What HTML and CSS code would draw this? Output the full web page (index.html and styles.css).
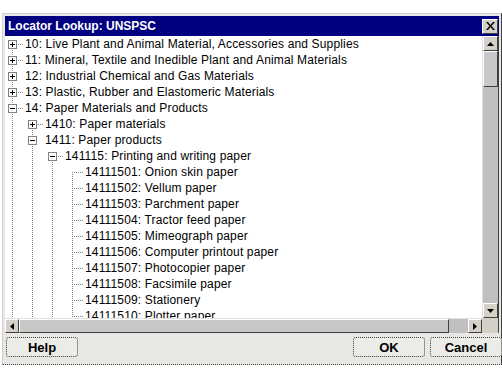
FILE: index.html
```html
<!DOCTYPE html>
<html lang="en">
<head>
  <meta charset="UTF-8" />
  <title>Locator Lookup: UNSPSC</title>
  <link rel="stylesheet" href="styles.css">
</head>
<body>

<div class="dialog">
  <div class="titlebar">
    <span class="title">Locator Lookup: UNSPSC</span>
    <span class="close">
      <svg width="9" height="8" viewBox="0 0 9 8"><path d="M0 0h2l2.5 3 2.5-3h2L5.5 4 9 8H7L4.5 5 2 8H0l3.5-4z" fill="#000"/></svg>
    </span>
  </div>

  <div class="panel">
    <div class="tree">
      <div class="row"><span class="cell tee first"><i class="box plus"></i></span><span class="label">10: Live Plant and Animal Material, Accessories and Supplies</span></div>
      <div class="row"><span class="cell tee"><i class="box plus"></i></span><span class="label">11: Mineral, Textile and Inedible Plant and Animal Materials</span></div>
      <div class="row"><span class="cell tee nodash"><i class="box plus"></i></span><span class="label">12: Industrial Chemical and Gas Materials</span></div>
      <div class="row"><span class="cell tee"><i class="box plus"></i></span><span class="label">13: Plastic, Rubber and Elastomeric Materials</span></div>
      <div class="row"><span class="cell tee"><i class="box minus"></i></span><span class="label">14: Paper Materials and Products</span></div>
      <div class="row"><span class="cell pipe"></span><span class="cell tee first"><i class="box plus"></i></span><span class="label">1410: Paper materials</span></div>
      <div class="row"><span class="cell pipe"></span><span class="cell tee nodash"><i class="box minus"></i></span><span class="label">1411: Paper products</span></div>
      <div class="row"><span class="cell pipe"></span><span class="cell pipe"></span><span class="cell tee first"><i class="box minus"></i></span><span class="label">141115: Printing and writing paper</span></div>
      <div class="row"><span class="cell pipe"></span><span class="cell pipe"></span><span class="cell pipe"></span><span class="cell tee first"></span><span class="label">14111501: Onion skin paper</span></div>
      <div class="row"><span class="cell pipe"></span><span class="cell pipe"></span><span class="cell pipe"></span><span class="cell tee"></span><span class="label">14111502: Vellum paper</span></div>
      <div class="row"><span class="cell pipe"></span><span class="cell pipe"></span><span class="cell pipe"></span><span class="cell tee"></span><span class="label">14111503: Parchment paper</span></div>
      <div class="row"><span class="cell pipe"></span><span class="cell pipe"></span><span class="cell pipe"></span><span class="cell tee"></span><span class="label">14111504: Tractor feed paper</span></div>
      <div class="row"><span class="cell pipe"></span><span class="cell pipe"></span><span class="cell pipe"></span><span class="cell tee"></span><span class="label">14111505: Mimeograph paper</span></div>
      <div class="row"><span class="cell pipe"></span><span class="cell pipe"></span><span class="cell pipe"></span><span class="cell tee"></span><span class="label">14111506: Computer printout paper</span></div>
      <div class="row"><span class="cell pipe"></span><span class="cell pipe"></span><span class="cell pipe"></span><span class="cell tee"></span><span class="label">14111507: Photocopier paper</span></div>
      <div class="row"><span class="cell pipe"></span><span class="cell pipe"></span><span class="cell pipe"></span><span class="cell tee"></span><span class="label">14111508: Facsimile paper</span></div>
      <div class="row"><span class="cell pipe"></span><span class="cell pipe"></span><span class="cell pipe"></span><span class="cell tee"></span><span class="label">14111509: Stationery</span></div>
      <div class="row"><span class="cell pipe"></span><span class="cell pipe"></span><span class="cell pipe"></span><span class="cell tee"></span><span class="label">14111510: Plotter paper</span></div>
    </div>

    <div class="vscroll">
      <span class="arrow"><svg width="7" height="4" viewBox="0 0 7 4"><path d="M3.5 0L7 4H0z" fill="#000"/></svg></span>
      <span class="vthumb"></span>
      <span class="vtrack"></span>
      <span class="arrow"><svg width="7" height="4" viewBox="0 0 7 4"><path d="M0 0h7L3.5 4z" fill="#000"/></svg></span>
    </div>

    <div class="hscroll">
      <span class="arrow"><svg width="4" height="7" viewBox="0 0 4 7"><path d="M4 0v7L0 3.5z" fill="#000"/></svg></span>
      <span class="hthumb"></span>
      <span class="htrack"></span>
      <span class="arrow"><svg width="4" height="7" viewBox="0 0 4 7"><path d="M0 0l4 3.5L0 7z" fill="#000"/></svg></span>
    </div>
    <div class="corner"></div>
  </div>

  <div class="buttons">
    <button class="btn help">Help</button>
    <span class="spacer"></span>
    <button class="btn">OK</button>
    <button class="btn">Cancel</button>
  </div>
</div>

</body>
</html>
```

FILE: styles.css
```css
body {
  margin: 0;
  background: #ffffff;
  font-family: 'Liberation Sans', Arial, sans-serif;
}

.dialog {
  margin: 13px 0 0 2px;
  width: 494px;
  height: 348px;
  padding: 2px 2px 0 2px;
  background: #e9e7e3;
  border-top: 1px solid #d0d0d0;
  border-left: 1px solid #d0d0d0;
  border-right: 1px solid #404040;
  border-bottom: 1px dotted #404040;
  display: flex;
  flex-direction: column;
}

.titlebar {
  height: 20px;
  background: #000080;
  display: flex;
  align-items: center;
  justify-content: space-between;
  padding: 0 1px 0 3px;
}

.title {
  color: #ffffff;
  font-weight: bold;
  font-size: 12px;
}

.close {
  width: 14px;
  height: 13px;
  background: #d4d0c8;
  border-top: 1px solid #ffffff;
  border-left: 1px solid #ffffff;
  border-right: 1px solid #404040;
  border-bottom: 1px solid #404040;
  display: flex;
  align-items: center;
  justify-content: center;
}

.panel {
  display: grid;
  grid-template-columns: 477px 16px;
  grid-template-rows: 282px 15px;
  background: #ffffff;
  border-right: 1px solid #404040;
}

.tree {
  overflow: hidden;
  font-size: 12px;
  letter-spacing: 0.15px;
  color: #000000;
}

.row {
  height: 16px;
  display: flex;
  align-items: center;
  white-space: nowrap;
}

.cell {
  width: 20px;
  height: 16px;
  flex: none;
  position: relative;
}

.pipe::before,
.tee::before {
  content: "";
  position: absolute;
  left: 7px;
  top: 0;
  bottom: 0;
  width: 1px;
  background: repeating-linear-gradient(to bottom, #808080 0 1px, transparent 1px 2px);
}

.tee.first::before {
  top: 8px;
}

.tee::after {
  content: "";
  position: absolute;
  left: 8px;
  top: 8px;
  width: 11px;
  height: 1px;
  background: repeating-linear-gradient(to right, transparent 0 1px, #808080 1px 2px);
}

.tee.nodash::after {
  display: none;
}

.box {
  position: absolute;
  left: 3px;
  top: 4px;
  width: 7px;
  height: 7px;
  border: 1px solid #808080;
  background: #ffffff;
  z-index: 1;
}

.box::before {
  content: "";
  position: absolute;
  left: 1px;
  top: 3px;
  width: 5px;
  height: 1px;
  background: #000000;
}

.plus::after {
  content: "";
  position: absolute;
  left: 3px;
  top: 1px;
  width: 1px;
  height: 5px;
  background: #000000;
}

.vscroll {
  background: #c0c0c0;
  display: flex;
  flex-direction: column;
  border-left: 1px solid #e0e0e0;
}

.hscroll {
  background: #c0c0c0;
  display: flex;
  border-top: 1px solid #e0e0e0;
}

.arrow {
  flex: none;
  width: 14px;
  height: 14px;
  background: #d4d0c8;
  border-top: 1px solid #ffffff;
  border-left: 1px solid #ffffff;
  border-right: 1px solid #404040;
  border-bottom: 1px solid #404040;
  box-sizing: border-box;
  display: flex;
  align-items: center;
  justify-content: center;
}

.vscroll .arrow {
  width: 15px;
  height: 15px;
}

.vthumb {
  flex: none;
  height: 34px;
  background: #c8c8c8;
  border-top: 1px solid #ffffff;
  border-left: 1px solid #ffffff;
  border-right: 1px solid #404040;
  border-bottom: 1px solid #404040;
}

.vtrack,
.htrack {
  flex: 1;
}

.hthumb {
  flex: none;
  width: 428px;
  background: #c8c8c8;
  border-top: 1px solid #ffffff;
  border-left: 1px solid #ffffff;
  border-right: 1px solid #404040;
  border-bottom: 1px solid #404040;
}

.corner {
  background: #d4d0c8;
}

.buttons {
  display: flex;
  gap: 5px;
  padding: 4px 0 0 1px;
  margin-right: -3px;
}

.spacer {
  flex: 1;
}

.btn {
  width: 72px;
  height: 20px;
  padding: 0;
  font-family: 'Liberation Sans', Arial, sans-serif;
  font-weight: bold;
  font-size: 13px;
  color: #000000;
  background: #ebebe8;
  border: 1px dotted #404040;
  border-radius: 3px;
}
```
